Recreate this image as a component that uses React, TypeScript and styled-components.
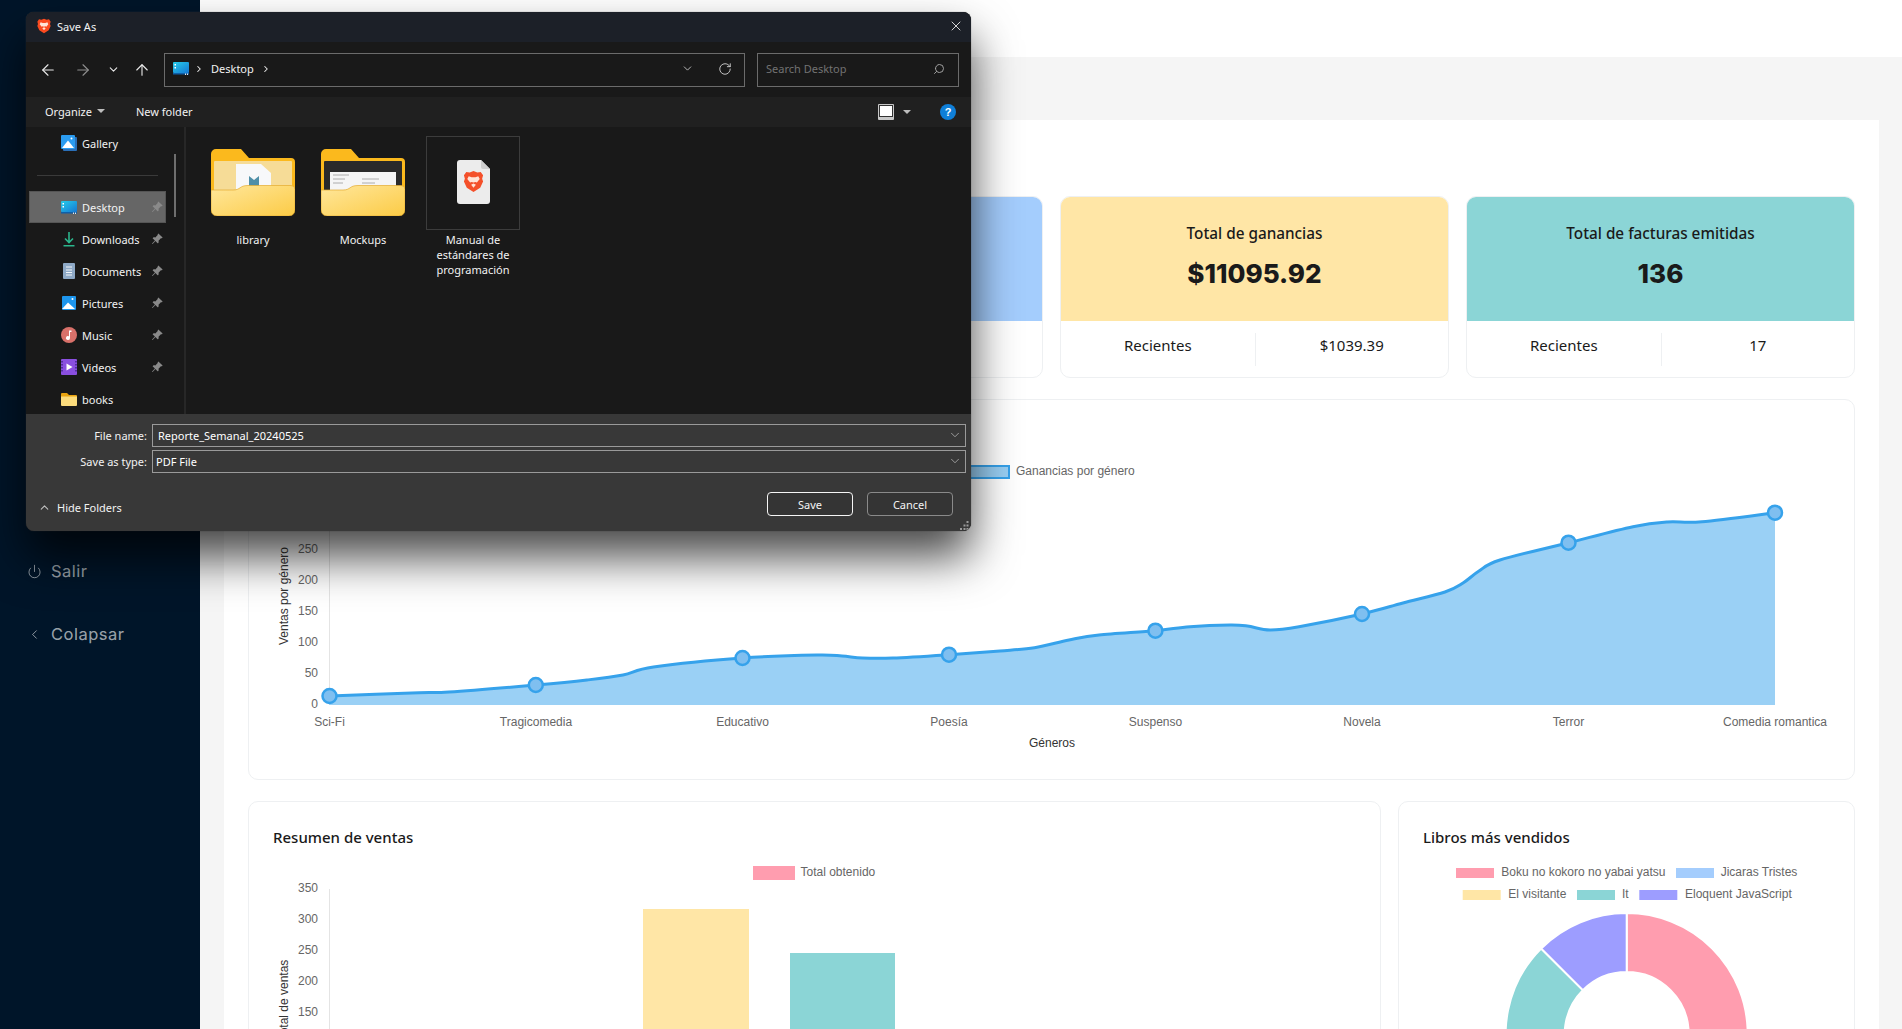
import { ReactNode } from "react";
import styled, { createGlobalStyle } from "styled-components";
import { ArrowLeft, ArrowRight, ArrowUp, ChevronDown, ChevronLeft, ChevronRight, ChevronUp, Power, RotateCw, Search, X } from "lucide-react";
import { BsPinAngleFill } from "react-icons/bs";

const GlobalStyle = createGlobalStyle`
    html, body {
        margin: 0;
        height: 100%;
        overflow: hidden;
    }
    * {
        box-sizing: border-box;
    }
`;

const Page = styled.div`
    position: relative;
    display: flex;
    width: 100%;
    height: 100vh;
    overflow: hidden;
    background-color: #f5f5f5;
    font-family: "Noto Sans", sans-serif;
`;

const Sidebar = styled.aside`
    flex: 0 0 200px;
    display: flex;
    flex-direction: column;
    gap: 11px;
    padding: 545px 0 0 27px;
    background-color: #001529;
`;

const SideItem = styled.div`
    display: flex;
    align-items: center;
    gap: 9px;
    height: 52px;
    font-family: Inter, sans-serif;
    font-size: 16.5px;
    letter-spacing: 0.5px;
    color: rgba(255, 255, 255, 0.62);
`;

const Main = styled.main`
    flex: 1;
    min-width: 0;
    display: flex;
    flex-direction: column;
`;

const Header = styled.header`
    flex: 0 0 57px;
    background-color: #fff;
`;

const Content = styled.div`
    padding: 63px 23px 0 24px;
`;

const Panel = styled.section`
    display: flex;
    flex-direction: column;
    gap: 21px;
    padding: 76px 24px 0;
    background-color: #fff;
`;

const StatGrid = styled.div`
    display: grid;
    grid-template-columns: repeat(4, 1fr);
    gap: 17px;
`;

const StatCard = styled.article`
    height: 182px;
    border: 1px solid #eef0f2;
    border-radius: 10px;
    overflow: hidden;
    background-color: #fff;
`;

const StatTop = styled.div<{ $color: string }>`
    display: flex;
    flex-direction: column;
    align-items: center;
    height: 125px;
    margin: -1px -1px 0;
    padding-top: 24px;
    background-color: ${(props) => props.$color};
    color: #1a1a1a;
`;

const StatTitle = styled.h3`
    margin: 0;
    font-size: 15.3px;
    line-height: 26px;
    font-weight: 500;
`;

const StatValue = styled.strong`
    margin-top: 10px;
    font-family: Inter, sans-serif;
    font-size: 26px;
    line-height: 36px;
    font-weight: 800;
`;

const StatFooter = styled.div`
    display: grid;
    grid-template-columns: 1fr 1fr;
    padding-top: 12px;
`;

const StatCell = styled.div`
    display: flex;
    align-items: center;
    justify-content: center;
    height: 33px;
    padding-bottom: 9px;
    font-size: 15px;
    font-weight: 400;
    color: #1a1a1a;

    & + & {
        border-left: 1px solid #eef0f2;
    }
`;

const ChartCard = styled.article`
    border: 1px solid #eef0f2;
    border-radius: 10px;
    background-color: #fff;
    overflow: hidden;

    svg {
        display: block;
    }
`;

const BottomGrid = styled.div`
    display: grid;
    grid-template-columns: 1133px 1fr;
    gap: 17px;
`;

const ChartHead = styled.h3`
    margin: 0;
    padding: 23px 24px 3px;
    font-size: 15px;
    line-height: 24px;
    font-weight: 500;
    color: #1a1a1a;
`;

const Dialog = styled.div`
    position: absolute;
    left: 26px;
    top: 12px;
    width: 945px;
    height: 519px;
    display: flex;
    flex-direction: column;
    border-radius: 8px;
    background-color: #191919;
    box-shadow: 0 26px 46px rgba(0, 0, 0, 0.72), 0 0 1px #555;
    overflow: hidden;
    font-family: "Noto Sans", sans-serif;
    font-size: 11px;
    color: #f2f2f2;
`;

const TitleBar = styled.div`
    flex: 0 0 30px;
    display: flex;
    align-items: center;
    gap: 5px;
    padding: 0 10px 2px;
    background-color: #1c2028;
`;

const CloseButton = styled.span`
    display: flex;
    margin-left: auto;
    margin-right: -3px;
    color: #f2f2f2;
`;

const NavRow = styled.div`
    flex: 0 0 55px;
    display: flex;
    align-items: center;
    padding: 0 12px 0 0;
    background-color: #191919;
`;

const NavButton = styled.span<{ $dim?: boolean; $width: number }>`
    flex: 0 0 ${(props) => props.$width}px;
    display: flex;
    justify-content: center;
    color: ${(props) => (props.$dim ? "#8f8f8f" : "#e8e8e8")};
`;

const AddressBox = styled.div`
    flex: 0 0 581px;
    display: flex;
    align-items: center;
    height: 34px;
    margin-left: 10px;
    padding: 0 12px 2px 8px;
    border: 1px solid #6b6b6b;
`;

const Crumb = styled.span`
    display: flex;
    margin: 0 2px 0 5px;
`;

const AddressTools = styled.span`
    display: flex;
    align-items: center;
    gap: 24px;
    margin-left: auto;
    color: #d8d8d8;
`;

const SearchBox = styled.div`
    flex: 1;
    display: flex;
    align-items: center;
    justify-content: space-between;
    height: 34px;
    margin-left: 12px;
    padding: 0 13px 2px 8px;
    border: 1px solid #6b6b6b;
    color: #727272;
`;

const Toolbar = styled.div`
    flex: 0 0 30px;
    display: flex;
    align-items: center;
    padding: 0 15px 2px 19px;
    background-color: #202020;
`;

const ToolLabel = styled.span`
    display: flex;
    align-items: center;
    gap: 5px;
`;

const Caret = styled.i`
    display: block;
    width: 0;
    height: 0;
    border-left: 4px solid transparent;
    border-right: 4px solid transparent;
    border-top: 4px solid #bdbdbd;
`;

const NewFolder = styled(ToolLabel)`
    margin-left: 31px;
`;

const ViewTools = styled.span`
    display: flex;
    align-items: center;
    gap: 9px;
    margin-left: auto;
    margin-top: 2px;
`;

const ViewIcon = styled.i`
    display: block;
    width: 16px;
    height: 16px;
    padding: 2px 2px 4px;
    background-color: #c8c8c8;
    border-radius: 1px;

    &::before {
        content: "";
        display: block;
        width: 100%;
        height: 100%;
        background-color: #fff;
        outline: 1px solid #333;
    }
`;

const HelpIcon = styled.span`
    display: flex;
    align-items: center;
    justify-content: center;
    width: 16px;
    height: 16px;
    margin-left: 20px;
    border-radius: 50%;
    background-color: #0f7fd8;
    font-family: "Liberation Sans", sans-serif;
    font-size: 11px;
    font-weight: 700;
    color: #fff;
`;

const Body = styled.div`
    flex: 1;
    min-height: 0;
    display: flex;
`;

const NavPane = styled.nav`
    position: relative;
    flex: 0 0 160px;
    padding: 0 0 0 3px;
    border-right: 2px solid #272727;
    overflow: hidden;
`;

const PaneScroll = styled.i`
    position: absolute;
    left: 148px;
    top: 27px;
    width: 2px;
    height: 63px;
    background-color: #6e6e6e;
`;

const PaneRow = styled.div<{ $active?: boolean }>`
    display: flex;
    align-items: center;
    gap: 5px;
    width: 137px;
    height: 32px;
    padding: 0 2px 0 31px;
    background-color: ${(props) => (props.$active ? "#666" : "transparent")};
    border: 1px solid ${(props) => (props.$active ? "#555" : "transparent")};
`;

const PaneRule = styled.div`
    display: flex;
    align-items: center;
    height: 32px;
    padding-left: 8px;

    &::before {
        content: "";
        width: 121px;
        height: 1px;
        background-color: #3a3a3a;
    }
`;

const PinMark = styled.span`
    display: flex;
    margin-left: auto;
    color: #8a8a8a;
`;

const FilesArea = styled.div`
    flex: 1;
    display: flex;
    align-items: flex-start;
    padding: 9px 0 0 12px;
`;

const FileTile = styled.div`
    flex: 0 0 110px;
    display: flex;
    flex-direction: column;
    align-items: center;
    text-align: center;
    line-height: 15px;
`;

const FolderThumb = styled.div`
    display: flex;
    align-items: flex-end;
    justify-content: center;
    height: 94px;
    padding-bottom: 14px;
`;

const DocThumb = styled.div`
    display: flex;
    align-items: center;
    justify-content: center;
    width: 94px;
    height: 94px;
    border: 1px solid #3c3c3c;
    padding-bottom: 2px;
`;

const TileName = styled.span`
    margin-top: 2px;
    width: 100px;
`;

const SaveArea = styled.div`
    flex: 0 0 117px;
    position: relative;
    display: flex;
    flex-direction: column;
    padding: 10px 5px 0 0;
    background-color: #383838;
`;

const FieldRow = styled.div`
    display: flex;
    align-items: center;
    gap: 5px;
    margin-bottom: 3px;
`;

const FieldLabel = styled.label`
    flex: 0 0 121px;
    padding-bottom: 1px;
    text-align: right;
`;

const FieldBox = styled.div<{ $inset: number }>`
    flex: 1;
    display: flex;
    align-items: center;
    justify-content: space-between;
    height: 23px;
    padding: 0 3px 1px ${(props) => props.$inset}px;
    border: 1px solid #9a9a9a;
    color: #fff;

    svg {
        color: #c4c4c4;
    }
`;

const SaveFooter = styled.div`
    display: flex;
    align-items: center;
    justify-content: space-between;
    margin-top: 16px;
    padding: 0 13px 0 12px;
`;

const HideFolders = styled.span`
    display: flex;
    align-items: center;
    gap: 6px;
    padding-top: 6px;

    svg {
        color: #c0c0c0;
    }
`;

const ButtonRow = styled.div`
    display: flex;
    gap: 14px;
`;

const DialogButton = styled.button<{ $primary?: boolean }>`
    width: 86px;
    height: 24px;
    padding: 0;
    border: 1px solid ${(props) => (props.$primary ? "#f5f5f5" : "#8a8a8a")};
    border-radius: 4px;
    background-color: #343434;
    color: #f5f5f5;
    font: inherit;
`;

const Grip = styled.svg`
    position: absolute;
    right: 2px;
    bottom: 1px;
`;

interface StatData {
    color: string;
    title?: string;
    value?: string;
    recent?: string;
}

const stats: StatData[] = [
    { color: "#ff9daf" },
    { color: "#a4cdfd" },
    { color: "#ffe6a6", title: "Total de ganancias", value: "$11095.92", recent: "$1039.39" },
    { color: "#8bd5d6", title: "Total de facturas emitidas", value: "136", recent: "17" },
];

// puntos leidos de la curva de la captura, en coordenadas de la pagina
const curve: [number, number][] = [
    [329.5, 696], [419, 692.7], [449, 692], [535.8, 685], [587, 680], [623, 675], [653.5, 667],
    [742.5, 658], [817, 655], [842, 656], [862.6, 658], [893, 658], [949, 654.7], [1000, 651],
    [1034.5, 647.7], [1069, 640], [1099, 635], [1155.4, 630.7], [1190, 626.7], [1230, 625],
    [1247.4, 626], [1270, 630], [1299, 626.7], [1362, 614], [1403, 603], [1445, 592],
    [1463, 583], [1479, 571], [1500, 560], [1568.5, 542.7], [1633, 526.7], [1667.4, 522],
    [1702, 521.7], [1775, 512.7],
];

const markers = [
    [329.5, 696], [535.8, 685], [742.5, 658], [949, 654.7],
    [1155.4, 630.7], [1362, 614], [1568.5, 542.7], [1775, 512.7],
];

const xLabels = ["Sci-Fi", "Tragicomedia", "Educativo", "Poesía", "Suspenso", "Novela", "Terror", "Comedia romantica"];

const smoothPath = (points: [number, number][]) => {
    let d = `M${points[0][0]} ${points[0][1]}`;
    for (let i = 0; i < points.length - 1; i++) {
        const p0 = points[Math.max(i - 1, 0)];
        const p1 = points[i];
        const p2 = points[i + 1];
        const p3 = points[Math.min(i + 2, points.length - 1)];
        d += ` C${p1[0] + (p2[0] - p0[0]) / 6} ${p1[1] + (p2[1] - p0[1]) / 6} ${p2[0] - (p3[0] - p1[0]) / 6} ${p2[1] - (p3[1] - p1[1]) / 6} ${p2[0]} ${p2[1]}`;
    }
    return d;
};

const arc = (cx: number, cy: number, r: number, r2: number, from: number, to: number) => {
    const pt = (radius: number, deg: number) => {
        const a = ((deg - 90) * Math.PI) / 180;
        return `${cx + radius * Math.cos(a)} ${cy + radius * Math.sin(a)}`;
    };
    const large = to - from > 180 ? 1 : 0;
    return `M${pt(r, from)} A${r} ${r} 0 ${large} 1 ${pt(r, to)} L${pt(r2, to)} A${r2} ${r2} 0 ${large} 0 ${pt(r2, from)} Z`;
};

const chartFont = { fontFamily: "Liberation Sans, sans-serif", fontSize: 12 };

function GenreChart() {
    const line = smoothPath(curve);
    return (
        <svg width="1605" height="379" viewBox="249 400 1605 379" style={chartFont}>
            <rect x="969" y="466" width="40" height="12" fill="#9ad0f5" stroke="#36a2eb" strokeWidth="2" />
            <text x="1016" y="475" fill="#666">Ganancias por género</text>
            <line x1="329.5" y1="470" x2="329.5" y2="705" stroke="#e4e4e4" />
            {[0, 50, 100, 150, 200, 250].map((v, i) => (
                <text key={v} x="318" y={707.5 - i * 31} fill="#666" textAnchor="end">{v}</text>
            ))}
            <text transform="translate(288 596) rotate(-90)" fill="#333" textAnchor="middle">Ventas por género</text>
            <path d={`${line} L1775 705 L329.5 705 Z`} fill="#9ad0f5" />
            <path d={line} fill="none" stroke="#36a2eb" strokeWidth="3" />
            {markers.map(([x, y]) => (
                <circle key={x} cx={x} cy={y} r="7" fill="#7fbff0" stroke="#36a2eb" strokeWidth="2.5" />
            ))}
            {xLabels.map((label, i) => (
                <text key={label} x={329.5 + i * 206.5} y="726" fill="#666" textAnchor="middle">{label}</text>
            ))}
            <text x="1052" y="747" fill="#333" textAnchor="middle">Géneros</text>
        </svg>
    );
}

function SalesChart() {
    return (
        <svg width="1131" height="200" viewBox="249 853 1131 200" style={chartFont}>
            <rect x="753" y="867" width="42" height="14" fill="#ff9daf" />
            <text x="800.5" y="877" fill="#666">Total obtenido</text>
            <line x1="329.5" y1="890" x2="329.5" y2="1050" stroke="#e4e4e4" />
            {[350, 300, 250, 200, 150].map((v, i) => (
                <text key={v} x="318" y={893 + i * 31} fill="#666" textAnchor="end">{v}</text>
            ))}
            <text transform="translate(288 1001) rotate(-90)" fill="#333" textAnchor="middle">Total de ventas</text>
            <rect x="643" y="910" width="106" height="140" fill="#ffe6a6" />
            <rect x="790" y="954" width="105" height="96" fill="#8bd5d6" />
        </svg>
    );
}

function BooksChart() {
    const cx = 1626.7;
    const cy = 1035;
    return (
        <svg width="454" height="200" viewBox="1399 853 454 200" style={chartFont}>
            <rect x="1456" y="869" width="38" height="10" fill="#ff9daf" />
            <text x="1501.3" y="877" fill="#666">Boku no kokoro no yabai yatsu</text>
            <rect x="1676" y="869" width="38" height="10" fill="#a4cdfd" />
            <text x="1720.7" y="877" fill="#666">Jicaras Tristes</text>
            <rect x="1462.7" y="891" width="38" height="10" fill="#ffe6a6" />
            <text x="1508.3" y="899" fill="#666">El visitante</text>
            <rect x="1577" y="891" width="38" height="10" fill="#8bd5d6" />
            <text x="1622" y="899" fill="#666">It</text>
            <rect x="1639.3" y="891" width="38" height="10" fill="#9d9dff" />
            <text x="1685" y="899" fill="#666">Eloquent JavaScript</text>
            <g stroke="#fff" strokeWidth="2">
                <path d={arc(cx, cy, 121, 62, 0, 180)} fill="#ff9daf" />
                <path d={arc(cx, cy, 121, 62, 180, 315)} fill="#8bd5d6" />
                <path d={arc(cx, cy, 121, 62, 315, 360)} fill="#9d9dff" />
            </g>
        </svg>
    );
}

function BraveMark({ size }: { size: number }) {
    return (
        <svg width={size} height={size} viewBox="0 0 24 24">
            <path d="M12 1 16 2.5 19.5 2 22 5.5 21 9 22 12 19 18.5 12 23 5 18.5 2 12 3 9 2 5.5 4.5 2 8 2.5Z" fill="#fb4a1f" />
            <path d="M7 6.500 10 7.500H14L17 6.500 18.500 9.500 15.500 13 14 12.500 12 13 10 12.500 8.500 13 5.500 9.500Z" fill="#ffe4d8" />
            <path d="M9.500 15.500 12 14 14.500 15.500 12 18.500Z" fill="#ffe4d8" />
        </svg>
    );
}

function FolderArt({ id, inner }: { id: string; inner: ReactNode }) {
    return (
        <svg width="84" height="67" viewBox="0 0 84 67">
            <defs>
                <linearGradient id={id} x1="0" y1="0" x2="1" y2="1">
                    <stop offset="0" stopColor="#ffe79c" />
                    <stop offset="1" stopColor="#fccb45" />
                </linearGradient>
            </defs>
            <path d="M0 5a5 5 0 0 1 5-5H30l8 9H80a4 4 0 0 1 4 4V60H0Z" fill="#fbb91d" />
            {inner}
            <path d="M0 41H22C30 41 28 36.500 37 36.500H80a4 4 0 0 1 4 4V61a6 6 0 0 1-6 6H6a6 6 0 0 1-6-6Z" fill={`url(#${id})`} stroke="#e4ab2e" strokeWidth="0.7" />
        </svg>
    );
}

function DesktopGlyph() {
    return (
        <svg width="16" height="13" viewBox="0 0 16 13">
            <defs>
                <linearGradient id="desk" x1="0" y1="0" x2="1" y2="1">
                    <stop offset="0" stopColor="#27cdea" />
                    <stop offset="1" stopColor="#1477d4" />
                </linearGradient>
            </defs>
            <rect width="16" height="11" rx="1" fill="url(#desk)" />
            <rect y="11" width="16" height="1.500" fill="#0f5fa8" />
            <rect x="1.500" y="2" width="1.500" height="1.500" fill="#fff" />
            <rect x="1.500" y="5" width="1.500" height="1.500" fill="#fff" />
            <rect x="12" y="11.500" width="1" height="1.500" fill="#e8e8e8" />
            <rect x="14" y="11.500" width="1" height="1.500" fill="#e8e8e8" />
        </svg>
    );
}

const paneIcons: Record<string, ReactNode> = {
    Gallery: (
        <svg width="16" height="16" viewBox="0 0 16 16">
            <rect x="2" y="2" width="14" height="14" rx="1" fill="#2a6fb8" />
            <rect width="14" height="14" rx="1" fill="#2b9cf0" />
            <path d="M1 13 7 5.500 13 13Z" fill="#fff" />
            <circle cx="10.500" cy="3.500" r="1" fill="#fff" />
        </svg>
    ),
    Desktop: <DesktopGlyph />,
    Downloads: (
        <svg width="16" height="16" viewBox="0 0 16 16" fill="none" stroke="#2bb58c" strokeWidth="1.600">
            <path d="M8 1V11M4 7.500 8 11.500 12 7.500M2.500 14.700H13.500" />
        </svg>
    ),
    Documents: (
        <svg width="16" height="16" viewBox="0 0 16 16">
            <rect x="2" width="12" height="16" rx="1" fill="#8ea9c6" />
            <path d="M5 4H11M5 7H11M5 9.500H11M5 12H11" stroke="#f2f5f8" />
        </svg>
    ),
    Pictures: (
        <svg width="16" height="16" viewBox="0 0 16 16">
            <rect x="1" y="1" width="14" height="14" rx="1" fill="#1d96ee" />
            <path d="M1 14 7 7.500 14 14Z" fill="#fff" />
            <circle cx="11.500" cy="4" r="1" fill="#fff" />
        </svg>
    ),
    Music: (
        <svg width="16" height="16" viewBox="0 0 16 16">
            <circle cx="8" cy="8" r="8" fill="#d9716a" />
            <path d="M8 3.500H10.500V5H9V11A2 2 0 1 1 8 9.300Z" fill="#fff" />
        </svg>
    ),
    Videos: (
        <svg width="16" height="16" viewBox="0 0 16 16">
            <rect width="16" height="16" rx="1" fill="#8a4fe0" />
            <path d="M5.500 4.500 11.500 8 5.500 11.500Z" fill="#fff" />
            <path d="M1 2V14M15 2V14" stroke="#3d2183" strokeWidth="1.400" strokeDasharray="1.500 1.500" />
        </svg>
    ),
    books: (
        <svg width="16" height="13" viewBox="0 0 16 13">
            <path d="M0 1a1 1 0 0 1 1-1H6L8 2H15a1 1 0 0 1 1 1V10H0Z" fill="#e9a30f" />
            <path d="M0 3.500H16V12a1 1 0 0 1-1 1H1a1 1 0 0 1-1-1Z" fill="#fcdc7c" />
        </svg>
    ),
};

const paneItems = ["Desktop", "Downloads", "Documents", "Pictures", "Music", "Videos"];

function SaveDialog() {
    return (
        <Dialog>
            <TitleBar>
                <BraveMark size={16} />
                <span>Save As</span>
                <CloseButton><X size={16} strokeWidth={1.3} /></CloseButton>
            </TitleBar>
            <NavRow>
                <NavButton $width={44}><ArrowLeft size={18} strokeWidth={1.5} /></NavButton>
                <NavButton $width={26} $dim><ArrowRight size={18} strokeWidth={1.5} /></NavButton>
                <NavButton $width={34}><ChevronDown size={13} strokeWidth={2} /></NavButton>
                <NavButton $width={24}><ArrowUp size={18} strokeWidth={1.5} /></NavButton>
                <AddressBox>
                    <DesktopGlyph />
                    <Crumb><ChevronRight size={10} strokeWidth={2.5} /></Crumb>
                    <Crumb>Desktop</Crumb>
                    <Crumb><ChevronRight size={10} strokeWidth={2.5} /></Crumb>
                    <AddressTools>
                        <ChevronDown size={13} strokeWidth={1.5} />
                        <RotateCw size={14} strokeWidth={1.5} />
                    </AddressTools>
                </AddressBox>
                <SearchBox>
                    <span>Search Desktop</span>
                    <Search size={12} color="#a0a0a0" style={{ transform: "scaleX(-1)" }} />
                </SearchBox>
            </NavRow>
            <Toolbar>
                <ToolLabel>Organize <Caret /></ToolLabel>
                <NewFolder>New folder</NewFolder>
                <ViewTools>
                    <ViewIcon />
                    <Caret />
                    <HelpIcon>?</HelpIcon>
                </ViewTools>
            </Toolbar>
            <Body>
                <NavPane>
                    <PaneScroll />
                    <PaneRow>{paneIcons.Gallery}Gallery</PaneRow>
                    <PaneRule />
                    {paneItems.map((item) => (
                        <PaneRow key={item} $active={item === "Desktop"}>
                            {paneIcons[item]}
                            {item}
                            <PinMark><BsPinAngleFill size={12} /></PinMark>
                        </PaneRow>
                    ))}
                    <PaneRow>{paneIcons.books}books</PaneRow>
                </NavPane>
                <FilesArea>
                    <FileTile>
                        <FolderThumb>
                            <FolderArt
                                id="folderA"
                                inner={
                                    <>
                                        <rect x="3" y="12" width="78" height="30" rx="1" fill="#f6dc97" />
                                        <path d="M25 15H50L60 24V42H25Z" fill="#f7f8fa" />
                                        <path d="M38 27 43 31 48 27V37H38Z" fill="#4f8fa8" />
                                    </>
                                }
                            />
                        </FolderThumb>
                        <TileName>library</TileName>
                    </FileTile>
                    <FileTile>
                        <FolderThumb>
                            <FolderArt
                                id="folderB"
                                inner={
                                    <>
                                        <rect x="3" y="12" width="78" height="30" rx="1" fill="#2a2a2a" />
                                        <rect x="9" y="23" width="66" height="19" fill="#f5f5f5" />
                                        <path d="M12 26H28M12 30H24M12 34H22M41 30H58M41 34H54" stroke="#9a9a9a" strokeWidth="0.8" />
                                    </>
                                }
                            />
                        </FolderThumb>
                        <TileName>Mockups</TileName>
                    </FileTile>
                    <FileTile>
                        <DocThumb>
                            <svg width="33" height="44" viewBox="0 0 33 44">
                                <path d="M3 0H24L33 9V41a3 3 0 0 1-3 3H3a3 3 0 0 1-3-3V3a3 3 0 0 1 3-3Z" fill="#ececec" />
                                <path d="M24 0 33 9H26a2 2 0 0 1-2-2Z" fill="#cfcfcf" />
                                <svg x="5" y="10" width="23" height="23" viewBox="0 0 24 24">
                                    <path d="M12 1 16 2.500 19.500 2 22 5.500 21 9 22 12 19 18.500 12 23 5 18.500 2 12 3 9 2 5.500 4.500 2 8 2.500Z" fill="#f4502a" />
                                    <path d="M7 6.500 10 7.500H14L17 6.500 18.500 9.500 15.500 13 14 12.500 12 13 10 12.500 8.500 13 5.500 9.500Z" fill="#ffe4d8" />
                                    <path d="M9.500 15.500 12 14 14.500 15.500 12 18.500Z" fill="#ffe4d8" />
                                </svg>
                            </svg>
                        </DocThumb>
                        <TileName>Manual de estándares de programación</TileName>
                    </FileTile>
                </FilesArea>
            </Body>
            <SaveArea>
                <FieldRow>
                    <FieldLabel>File name:</FieldLabel>
                    <FieldBox $inset={5}>
                        <span>Reporte_Semanal_20240525</span>
                        <ChevronDown size={14} strokeWidth={1.2} />
                    </FieldBox>
                </FieldRow>
                <FieldRow>
                    <FieldLabel>Save as type:</FieldLabel>
                    <FieldBox $inset={3}>
                        <span>PDF File</span>
                        <ChevronDown size={14} strokeWidth={1.2} />
                    </FieldBox>
                </FieldRow>
                <SaveFooter>
                    <HideFolders><ChevronUp size={13} strokeWidth={2} />Hide Folders</HideFolders>
                    <ButtonRow>
                        <DialogButton $primary>Save</DialogButton>
                        <DialogButton>Cancel</DialogButton>
                    </ButtonRow>
                </SaveFooter>
                <Grip width="9" height="9" viewBox="0 0 9 9" fill="#9a9a9a">
                    <rect x="6.500" y="0" width="2" height="2" />
                    <rect x="3.500" y="3.500" width="2" height="2" />
                    <rect x="6.500" y="3.500" width="2" height="2" />
                    <rect x="0" y="7" width="2" height="2" />
                    <rect x="3.500" y="7" width="2" height="2" />
                    <rect x="6.500" y="7" width="2" height="2" />
                </Grip>
            </SaveArea>
        </Dialog>
    );
}

function App() {
    return (
        <Page>
            <GlobalStyle />
            <Sidebar>
                <SideItem><Power size={15} strokeWidth={1.4} />Salir</SideItem>
                <SideItem><ChevronLeft size={15} strokeWidth={1.4} />Colapsar</SideItem>
            </Sidebar>
            <Main>
                <Header />
                <Content>
                    <Panel>
                        <StatGrid>
                            {stats.map((stat) => (
                                <StatCard key={stat.color}>
                                    <StatTop $color={stat.color}>
                                        <StatTitle>{stat.title}</StatTitle>
                                        <StatValue>{stat.value}</StatValue>
                                    </StatTop>
                                    {stat.recent && (
                                        <StatFooter>
                                            <StatCell>Recientes</StatCell>
                                            <StatCell>{stat.recent}</StatCell>
                                        </StatFooter>
                                    )}
                                </StatCard>
                            ))}
                        </StatGrid>
                        <ChartCard><GenreChart /></ChartCard>
                        <BottomGrid>
                            <ChartCard>
                                <ChartHead>Resumen de ventas</ChartHead>
                                <SalesChart />
                            </ChartCard>
                            <ChartCard>
                                <ChartHead>Libros más vendidos</ChartHead>
                                <BooksChart />
                            </ChartCard>
                        </BottomGrid>
                    </Panel>
                </Content>
            </Main>
            <SaveDialog />
        </Page>
    );
}

export default App;
